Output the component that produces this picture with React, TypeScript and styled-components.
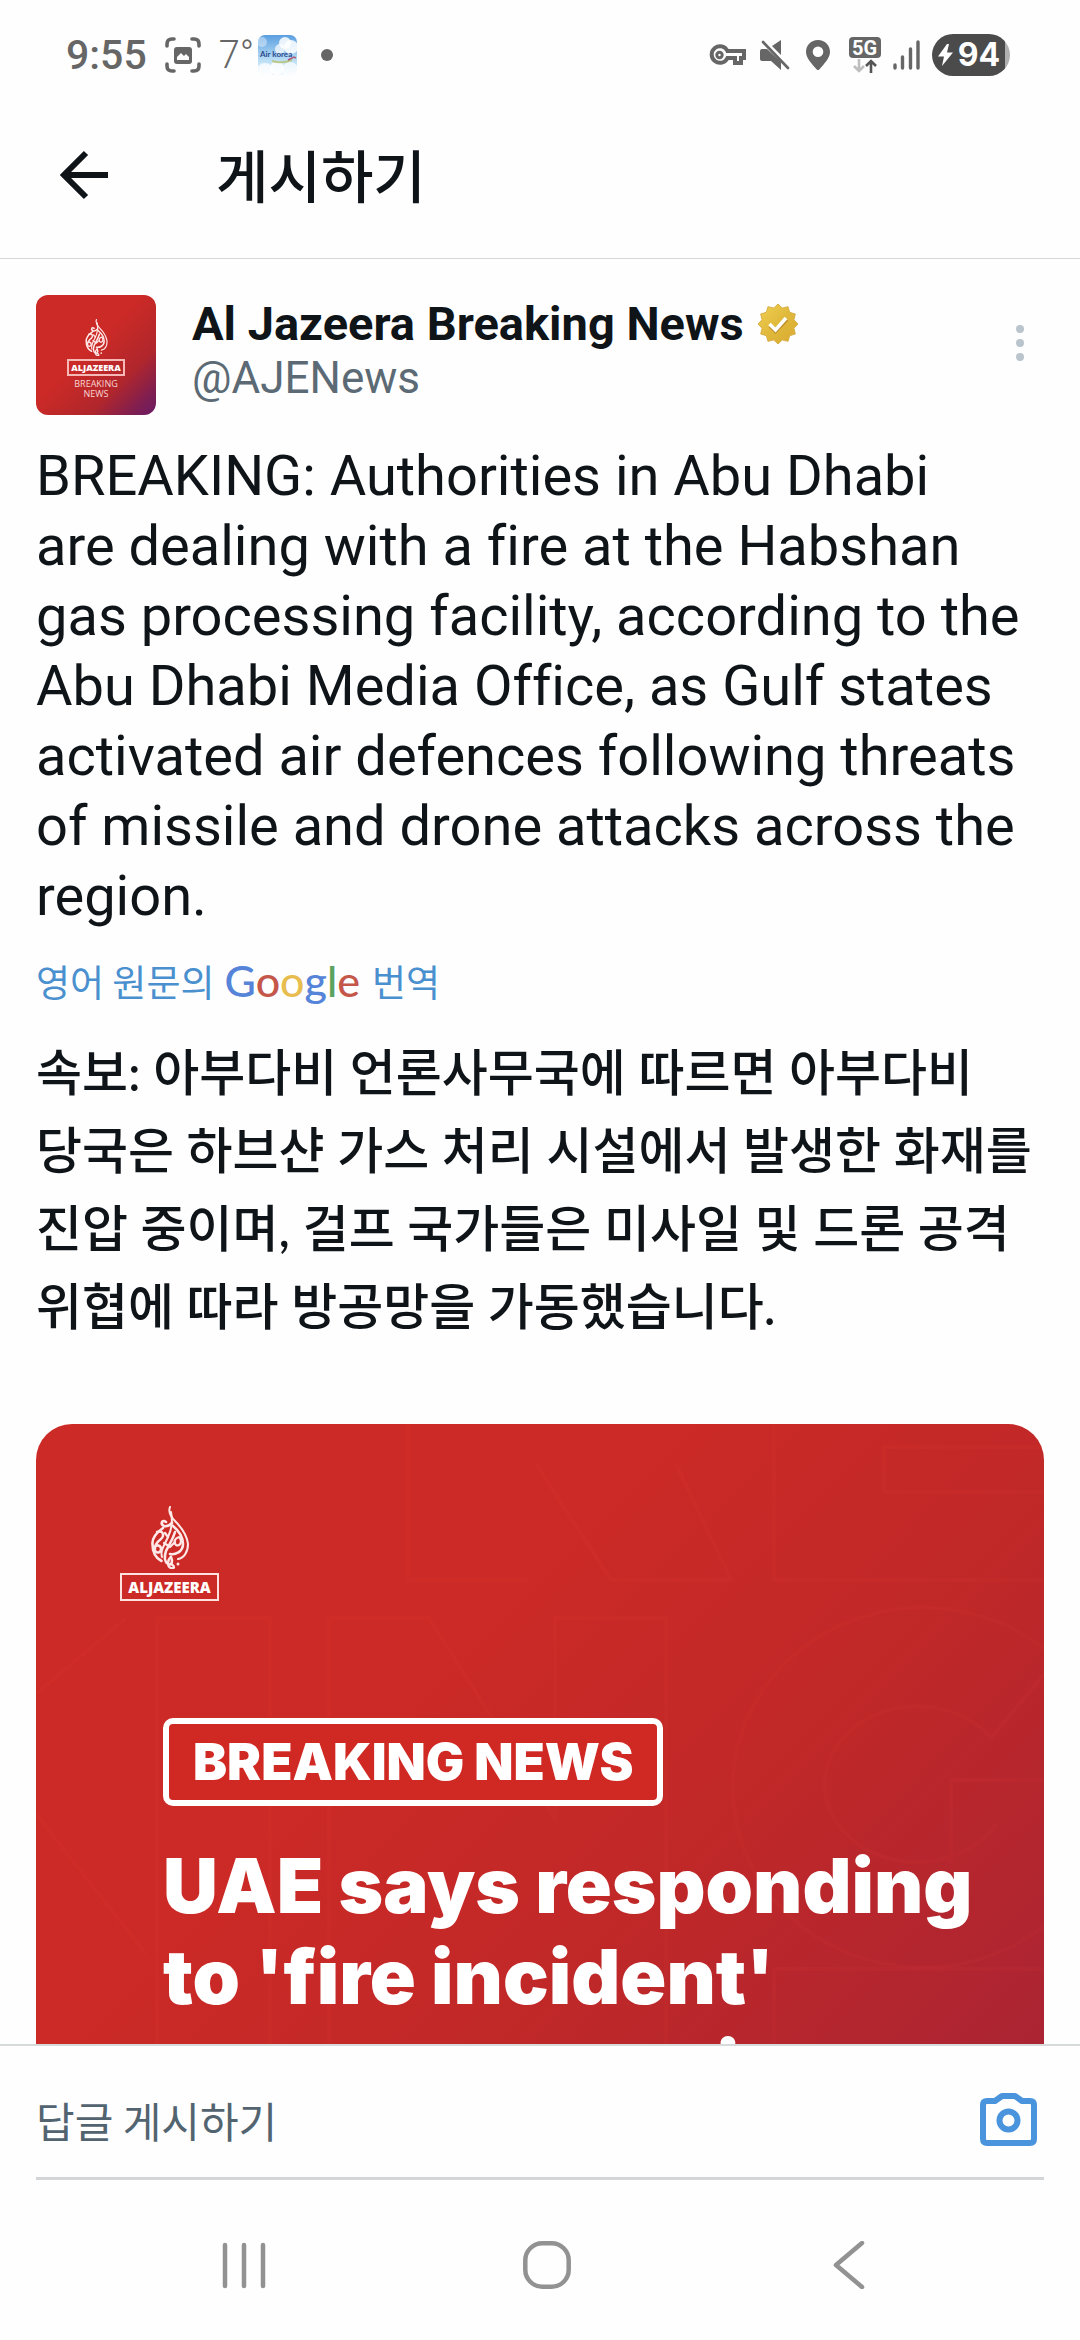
import React from "react";
import styled, { createGlobalStyle } from "styled-components";

const latin = `Roboto, "Noto Sans CJK KR", sans-serif`;
const korean = `"Noto Sans CJK KR", Roboto, sans-serif`;
const koreanText = `Lato, "Noto Sans CJK KR", sans-serif`;

const GlobalStyle = createGlobalStyle`
  *, *::before, *::after { box-sizing: border-box; }
  body { margin: 0; background: #fefefe; color: #0f1419; font-family: ${latin}; }
  button { border: 0; padding: 0; background: none; color: inherit; font: inherit; cursor: pointer; }
  h1, h2, p { margin: 0; }
  svg { display: block; flex: none; }
`;

const Screen = styled.div`
  display: flex;
  flex-direction: column;
  height: 100vh;
  overflow: hidden;
`;

const StatusBar = styled.div`
  display: flex;
  align-items: center;
  justify-content: space-between;
  height: 92px;
  padding: 18px 70px 0 66px;
  color: #666;
`;

const StatusGroup = styled.div<{ $gap: number }>`
  display: flex;
  align-items: center;
  gap: ${(p) => p.$gap}px;
`;

const Clock = styled.time`
  font-size: 41px;
  line-height: 40px;
  font-weight: 500;
`;

const Temperature = styled.span`
  font-size: 38px;
  line-height: 40px;
  font-weight: 300;
`;

const TempGroup = styled.div`
  display: flex;
  align-items: center;
  gap: 4px;
`;

const NoticeDot = styled.span`
  width: 12px;
  height: 12px;
  margin-left: 6px;
  border-radius: 50%;
  background: #666;
`;

const NetworkBadge = styled.div`
  display: flex;
  flex-direction: column;
  align-items: center;
  width: 33px;
`;

const NetworkLabel = styled.span`
  width: 32px;
  height: 21px;
  border-radius: 4px;
  background: #666;
  color: #fff;
  font: 700 20px/22px ${latin};
  text-align: center;
`;

const Battery = styled.div`
  display: flex;
  align-items: center;
  justify-content: center;
  gap: 5px;
  width: 78px;
  height: 42px;
  padding-right: 4px;
  border-radius: 21px;
  background: linear-gradient(90deg, #4b4b4b 73px, #b0b0b0 73px);
  color: #fff;
  font: 700 32px/42px Inter, sans-serif;
`;

const AppBar = styled.header`
  display: flex;
  align-items: center;
  gap: 106px;
  height: 167px;
  padding: 0 60px;
  border-bottom: 1px solid #d3d7d7;
`;

const Title = styled.h1`
  padding-bottom: 4px;
  font: 500 57px/72px ${korean};
`;

const Post = styled.main`
  flex: 1;
  min-height: 0;
  overflow: hidden;
  padding: 36px 36px 0;
`;

const Author = styled.div`
  display: flex;
  gap: 36px;
  height: 120px;
`;

const Avatar = styled.div`
  display: flex;
  flex-direction: column;
  align-items: center;
  width: 120px;
  height: 120px;
  padding-top: 24px;
  border-radius: 12px;
  background: linear-gradient(135deg, #cb2a26 45%, #b0262c 72%, #7d1e52 90%, #6a1b66);
  color: #fbd5d3;
`;

const AvatarWordmark = styled.span`
  margin-top: 3px;
  width: 58px;
  height: 17px;
  border: 2px solid #f7b9b6;
  color: #fff;
  font: 800 9px/13px "Open Sans", sans-serif;
  text-align: center;
`;

const AvatarCaption = styled.span`
  margin-top: 3px;
  font: 400 9px/10px "Open Sans", sans-serif;
  text-align: center;
`;

const Names = styled.div`
  flex: 1;
  padding-top: 1px;
`;

const NameRow = styled.div`
  display: flex;
  align-items: center;
  gap: 14px;
`;

const DisplayName = styled.h2`
  font: 700 47px/56px ${latin};
`;

const Handle = styled.p`
  color: #5b6a75;
  font-size: 44px;
  line-height: 52px;
`;

const MoreButton = styled.button`
  display: flex;
  align-self: flex-start;
  padding: 29px 19px;
`;

const Body = styled.p`
  margin-top: 26px;
  font-size: 56px;
  line-height: 70px;
  font-variant-ligatures: none;
  white-space: nowrap;
`;

const TranslateLink = styled.a`
  display: flex;
  align-items: baseline;
  margin-top: 22px;
  color: #4a90cf;
  font: 400 37px/56px ${korean};
  text-decoration: none;
`;

const GoogleMark = styled.span`
  margin: 0 12px 0 10px;
  font: 500 43px/56px Lato, sans-serif;
`;

const Letter = styled.span<{ $color: string }>`
  color: ${(p) => p.$color};
`;

const Translation = styled.p`
  margin-top: 24px;
  font: 500 50px/78px ${koreanText};
  white-space: nowrap;
`;

const Card = styled.section`
  position: relative;
  height: 1008px;
  margin-top: 79px;
  padding: 82px 96px 0 84px;
  border-radius: 36px;
  background: linear-gradient(135deg, #cc2a26 30%, #c02828 54%, #ab2433 81%, #8a1f4c);
  color: #fff;
  overflow: hidden;
`;

const Backdrop = styled.svg`
  position: absolute;
  inset: 0;
  width: 100%;
  height: 100%;
`;

const CardContent = styled.div`
  position: relative;
`;

const Brand = styled.div`
  display: flex;
  flex-direction: column;
  align-items: center;
  gap: 4px;
  width: 99px;
`;

const BrandName = styled.span`
  width: 99px;
  height: 28px;
  border: 2px solid #ffe1df;
  font: 800 15px/24px "Open Sans", sans-serif;
  text-align: center;
`;

const BreakingTag = styled.div`
  width: fit-content;
  margin: 117px 0 0 43px;
  padding: 0 24px;
  border: 6px solid #fff;
  border-radius: 10px;
  background: #d02823;
  font: 900 51px/76px Inter, sans-serif;
  white-space: nowrap;
`;

const Headline = styled.p`
  margin: 34px 0 0 43px;
  font: 900 76px/91px Inter, sans-serif;
  white-space: nowrap;
`;

const Composer = styled.form`
  padding: 0 36px;
  border-top: 2px solid #d6dadb;
`;

const ComposerField = styled.div`
  display: flex;
  align-items: center;
  height: 134px;
  padding-top: 17px;
  border-bottom: 3px solid #d2d6d8;
`;

const ReplyInput = styled.input`
  flex: 1;
  min-width: 0;
  padding: 0;
  border: 0;
  outline: 0;
  background: none;
  font: 400 42px/60px ${korean};
  &::placeholder { color: #536471; opacity: 1; }
`;

const CameraButton = styled.button`
  padding: 0 7px 0 8px;
`;

const NavBar = styled.nav`
  display: flex;
  align-items: center;
  justify-content: space-between;
  height: 160px;
  padding: 10px 215px 0 221px;
`;

function Calligraph({ width, height }: { width: number; height: number }) {
  return (
    <svg width={width} height={height} viewBox="0 0 38 63" fill="none" stroke="#ffe9e8" strokeLinecap="round" strokeLinejoin="round" aria-hidden="true">
      <path d="M19 1c-2 5 0 9 5 14 7 7 12 14 13 23 0 8-4 14-10 15" strokeWidth="2" />
      <path d="M20 6c2 10 1 17-3 25-4 9-8 14-6 20" strokeWidth="2" />
      <path d="M15 16c-4-3-6 2-2 4 3 1 6-1 8-3M12 22C5 27 1 32 1.500 38c0 8 3 14 9 17" strokeWidth="2.600" />
      <path d="M6 26c6-2 8 3 4 7-4 3-7 6-6 11 1 4 6 3 6-1s-5-5-7-1" strokeWidth="2.400" />
      <path d="M22 20c6 5 10 10 10 18s-8 11-13 10M24 26c-2 7-6 13-9 19-2 6-1 11 2 13 4 2 5-3 3-7" strokeWidth="2.600" />
      <path d="M28 31c-4 1-6 5-3 8 4 2 7-4 3-8M14 27l3 4M13 37l6 4 5-5M20 58c4 2 4 5 0 4s-4-8 0-11" strokeWidth="2.200" />
      <circle cx="27" cy="58" r="1.500" fill="#ffe9e8" stroke="none" />
    </svg>
  );
}

function CaptureIcon() {
  return (
    <svg width="36" height="36" viewBox="0 0 36 36" fill="none" stroke="#666" strokeWidth="3.600" strokeLinecap="round" aria-hidden="true">
      <path d="M2 9V7q0-5 5-5h2M27 2h2q5 0 5 5v2M34 27v2q0 5-5 5h-2M9 34H7q-5 0-5-5v-2" />
      <rect x="9" y="10" width="18" height="17" rx="3" fill="#666" stroke="none" />
      <path d="M12 23v-3l4-4 3 3 2-2 3 3v3z" fill="#fff" stroke="none" />
    </svg>
  );
}

function AirKoreaIcon() {
  return (
    <svg width="39" height="40" viewBox="0 0 39 40" role="img" aria-label="Air korea">
      <defs>
        <linearGradient id="sky" x1="0" y1="0" x2="0" y2="1">
          <stop offset="0" stopColor="#5b9fe0" />
          <stop offset="0.6" stopColor="#b7dcf5" />
          <stop offset="1" stopColor="#eef7fd" />
        </linearGradient>
        <clipPath id="tile"><rect width="39" height="40" rx="7" /></clipPath>
      </defs>
      <g clipPath="url(#tile)">
        <rect width="39" height="40" fill="url(#sky)" />
        <g fill="#fff">
          <circle cx="27" cy="8" r="6" opacity="0.850" /><circle cx="33" cy="12" r="7" opacity="0.850" /><circle cx="22" cy="14" r="5" opacity="0.700" />
          <circle cx="4" cy="7" r="5" opacity="0.400" /><circle cx="7" cy="36" r="8" opacity="0.800" /><circle cx="19" cy="33" r="7" opacity="0.850" /><circle cx="32" cy="35" r="8" opacity="0.700" />
        </g>
        <path d="M14 26q10 3 20-1" fill="none" stroke="#b9c98a" strokeWidth="2" />
        <path d="M30 25l6-3 2 1" fill="none" stroke="#b05a78" strokeWidth="1.500" />
        <text x="2" y="22" fontFamily="Lato, sans-serif" fontSize="8" fontWeight="700" fill="#2b4a8c">Air korea</text>
      </g>
    </svg>
  );
}

function StatusIcons() {
  return (
    <StatusGroup $gap={12}>
      <svg width="39" height="22" viewBox="0 0 39 22" fill="none" stroke="#666" strokeWidth="4" aria-hidden="true">
        <path d="M18.500 7H35v7h-3v5h-6v-5h-7.500A8.300 8.300 0 1 1 18.500 7z" />
        <circle cx="10.500" cy="11" r="2.700" strokeWidth="3" />
      </svg>
      <svg width="34" height="30" viewBox="0 0 34 30" aria-hidden="true">
        <path d="M0 11q0-2 2-2h5l14 13v8L11 21H2q-2 0-2-2zM12 6l9-6v15z" fill="#666" />
        <path d="M3 2l25 26" stroke="#666" strokeWidth="2.600" strokeLinecap="round" />
      </svg>
      <svg width="30" height="30" viewBox="0 0 30 30" aria-hidden="true">
        <path fill="#666" fillRule="evenodd" d="M12 0c7 0 12 5 12 12 0 6-6 12-10.500 17.300q-1.500 1.500-3 0C6 24 0 18 0 12 0 5 5 0 12 0zm0 6.500a5.300 5.300 0 1 0 0 10.600 5.300 5.300 0 0 0 0-10.600z" />
      </svg>
      <NetworkBadge>
        <NetworkLabel>5G</NetworkLabel>
        <svg width="26" height="15" viewBox="0 0 26 15" fill="none" strokeWidth="2.600" aria-hidden="true">
          <path d="M7 1v12M2 8l5 5 5-5" stroke="#bdbdbd" />
          <path d="M19 15V3M14 8l5-5 5 5" stroke="#555" />
        </svg>
      </NetworkBadge>
      <svg width="27" height="30" viewBox="0 0 27 30" stroke="#666" strokeWidth="3.400" strokeLinecap="round" aria-hidden="true">
        <path d="M2 25v3M9.500 17v11M17.500 9v19M25 2v26" />
      </svg>
      <Battery>
        <svg width="15" height="22" viewBox="0 0 15 22" aria-hidden="true"><path d="M9 0L0 12.500h6L4 22 15 8.500H9L11 0z" fill="#fff" /></svg>
        94
      </Battery>
    </StatusGroup>
  );
}

const sealPoints = Array.from({ length: 24 }, (_, i) => {
  const r = i % 2 ? 16.500 : 20;
  const a = (i * Math.PI) / 12 - Math.PI / 2;
  return `${20 + r * Math.cos(a)},${20 + r * Math.sin(a)}`;
}).join(" ");

function VerifiedSeal() {
  return (
    <svg width="40" height="40" viewBox="0 0 40 40" role="img" aria-label="인증됨">
      <defs>
        <linearGradient id="gold" x1="0" y1="0" x2="1" y2="1">
          <stop offset="0" stopColor="#f0d052" /><stop offset="0.500" stopColor="#e0b93b" /><stop offset="1" stopColor="#d9a92f" />
        </linearGradient>
      </defs>
      <polygon points={sealPoints} fill="url(#gold)" stroke="#d8b04a" strokeWidth="1" />
      <path d="M12 22l5.500 5.500L29 15.500" fill="none" stroke="#c08f2e" strokeWidth="3.500" />
      <path d="M11.500 20l6 6L28 14" fill="none" stroke="#fff" strokeWidth="3.500" />
    </svg>
  );
}

export default function App() {
  return (
    <>
      <GlobalStyle />
      <Screen>
        <StatusBar>
          <StatusGroup $gap={18}>
            <Clock>9:55</Clock>
            <CaptureIcon />
            <TempGroup>
              <Temperature>7°</Temperature>
              <AirKoreaIcon />
            </TempGroup>
            <NoticeDot />
          </StatusGroup>
          <StatusIcons />
        </StatusBar>

        <AppBar>
          <button type="button" aria-label="뒤로">
            <svg width="50" height="50" viewBox="0 0 50 50" fill="none" stroke="#0f1419" strokeWidth="6" aria-hidden="true">
              <path d="M26 3L4 25l22 22M4 25h44" />
            </svg>
          </button>
          <Title>게시하기</Title>
        </AppBar>

        <Post>
          <Author>
            <Avatar>
              <Calligraph width={23} height={37} />
              <AvatarWordmark>ALJAZEERA</AvatarWordmark>
              <AvatarCaption>BREAKING<br />NEWS</AvatarCaption>
            </Avatar>
            <Names>
              <NameRow>
                <DisplayName>Al Jazeera Breaking News</DisplayName>
                <VerifiedSeal />
              </NameRow>
              <Handle>@AJENews</Handle>
            </Names>
            <MoreButton type="button" aria-label="더 보기">
              <svg width="10" height="38" viewBox="0 0 10 38" fill="#b9c4cd" aria-hidden="true">
                <circle cx="5" cy="5" r="4" /><circle cx="5" cy="19" r="4" /><circle cx="5" cy="33" r="4" />
              </svg>
            </MoreButton>
          </Author>

          <Body>
            BREAKING: Authorities in Abu Dhabi<br />
            are dealing with a fire at the Habshan<br />
            gas processing facility, according to the<br />
            Abu Dhabi Media Office, as Gulf states<br />
            activated air defences following threats<br />
            of missile and drone attacks across the<br />
            region.
          </Body>

          <TranslateLink href="#translation">
            영어 원문의
            <GoogleMark>
              <Letter $color="#5684d8">G</Letter>
              <Letter $color="#c4564a">o</Letter>
              <Letter $color="#e8bd50">o</Letter>
              <Letter $color="#5684d8">g</Letter>
              <Letter $color="#5ba35f">l</Letter>
              <Letter $color="#c4564a">e</Letter>
            </GoogleMark>
            번역
          </TranslateLink>

          <Translation id="translation" lang="ko">
            속보: 아부다비 언론사무국에 따르면 아부다비<br />
            당국은 하브샨 가스 처리 시설에서 발생한 화재를<br />
            진압 중이며, 걸프 국가들은 미사일 및 드론 공격<br />
            위협에 따라 방공망을 가동했습니다.
          </Translation>

          <Card>
            <Backdrop viewBox="0 0 1008 1008" preserveAspectRatio="xMinYMin slice" fill="none" stroke="#ff5a4a" strokeOpacity="0.060" strokeWidth="4" aria-hidden="true">
              <path d="M121 700V194h113v506M293 700V194h100l126 200V194h111v506" />
              <path d="M1008 225A190 180 0 1 0 1008 502M1008 250l-53 64A92 78 0 1 0 960 400M915 440v-84h93" />
              <path d="M738 0v156h270M1008 23H848v45h160M372 0v156h120M500 40l75 116h120L640 40M0 270l90-76M0 390l110 140" />
              <path d="M738 545h270M738 545v463" />
            </Backdrop>
            <CardContent>
              <Brand>
                <Calligraph width={38} height={63} />
                <BrandName>ALJAZEERA</BrandName>
              </Brand>
              <BreakingTag>BREAKING NEWS</BreakingTag>
              <Headline>
                UAE says responding<br />
                to 'fire incident'<br />
                at gas processing
              </Headline>
            </CardContent>
          </Card>
        </Post>

        <Composer onSubmit={(e) => e.preventDefault()}>
          <ComposerField>
            <ReplyInput type="text" aria-label="답글 게시하기" placeholder="답글 게시하기" />
            <CameraButton type="button" aria-label="사진 추가">
              <svg width="58" height="56" viewBox="0 0 58 56" fill="none" stroke="#4a94dd" strokeWidth="6" strokeLinejoin="round" aria-hidden="true">
                <path d="M8 9h8l7-5h13l7 5h8q4 0 4 4v34q0 4-4 4H8q-4 0-4-4V13q0-4 4-4z" />
                <circle cx="29.500" cy="28.500" r="9" />
              </svg>
            </CameraButton>
          </ComposerField>
        </Composer>

        <NavBar>
          <button type="button" aria-label="최근 앱">
            <svg width="46" height="48" viewBox="0 0 46 48" stroke="#929292" strokeWidth="4.500" strokeLinecap="round" aria-hidden="true">
              <path d="M4 4v41M23 4v41M42 4v41" />
            </svg>
          </button>
          <button type="button" aria-label="홈">
            <svg width="48" height="48" viewBox="0 0 48 48" fill="none" stroke="#929292" strokeWidth="4.500" aria-hidden="true">
              <rect x="2.300" y="2.300" width="43.400" height="43.400" rx="17" />
            </svg>
          </button>
          <button type="button" aria-label="뒤로">
            <svg width="38" height="48" viewBox="-6 0 38 48" fill="none" stroke="#929292" strokeWidth="4.500" strokeLinecap="round" strokeLinejoin="round" aria-hidden="true">
              <path d="M29 2L3 24l26 22" />
            </svg>
          </button>
        </NavBar>
      </Screen>
    </>
  );
}
